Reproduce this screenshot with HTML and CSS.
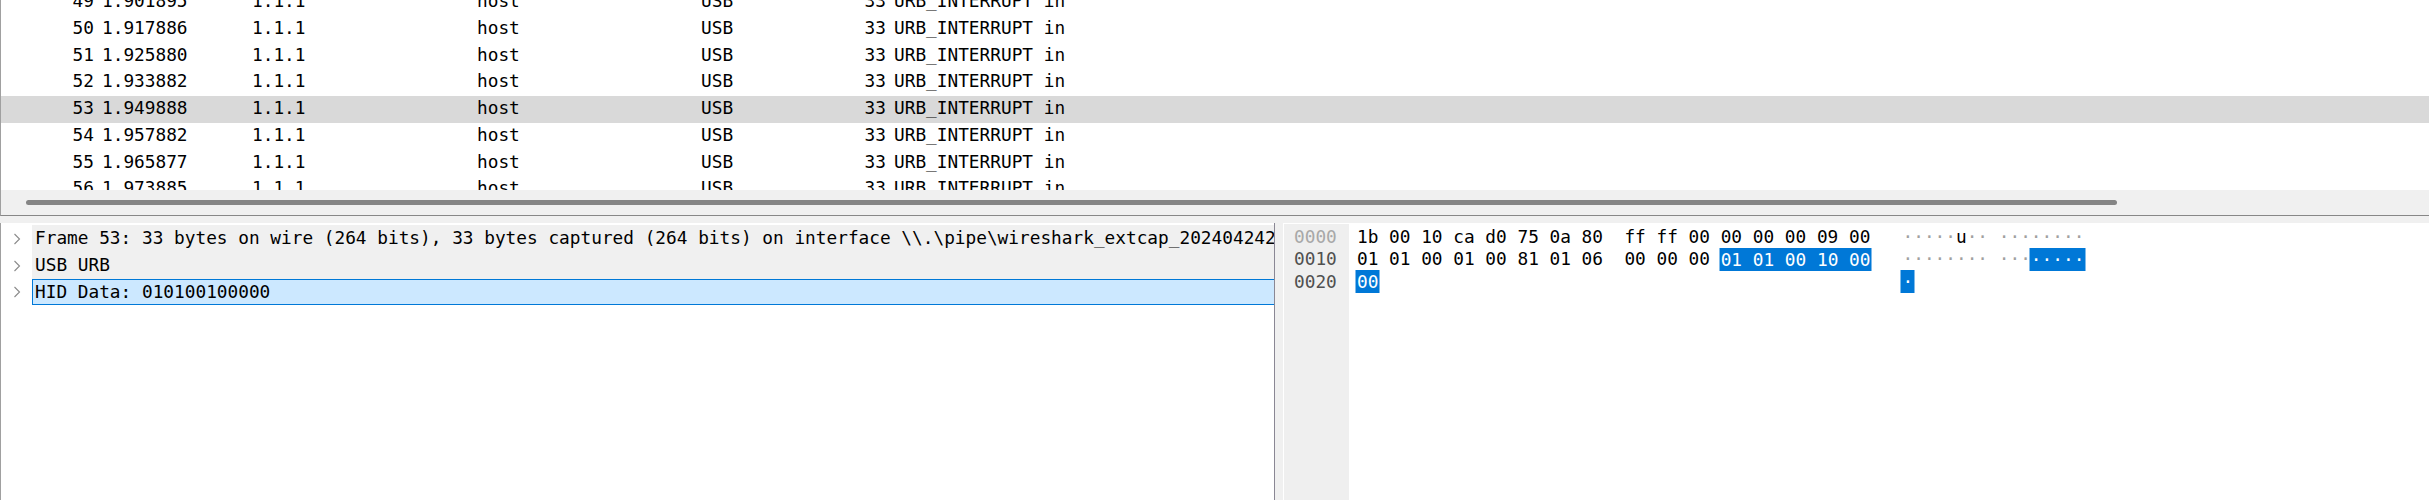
FILE: index.html
```
<!DOCTYPE html>
<html>
<head>
<meta charset="utf-8">
<link rel="stylesheet" href="styles.css">
</head>
<body>
<div class="app">
  <div class="list-frame">
    <div class="list">
      <div class="rows">
        <div class="row"><span class="no">49</span><span class="time">1.901895</span><span>1.1.1</span><span>host</span><span>USB</span><span class="len">33</span><span class="info">URB_INTERRUPT in</span></div>
        <div class="row"><span class="no">50</span><span class="time">1.917886</span><span>1.1.1</span><span>host</span><span>USB</span><span class="len">33</span><span class="info">URB_INTERRUPT in</span></div>
        <div class="row"><span class="no">51</span><span class="time">1.925880</span><span>1.1.1</span><span>host</span><span>USB</span><span class="len">33</span><span class="info">URB_INTERRUPT in</span></div>
        <div class="row"><span class="no">52</span><span class="time">1.933882</span><span>1.1.1</span><span>host</span><span>USB</span><span class="len">33</span><span class="info">URB_INTERRUPT in</span></div>
        <div class="row sel"><span class="no">53</span><span class="time">1.949888</span><span>1.1.1</span><span>host</span><span>USB</span><span class="len">33</span><span class="info">URB_INTERRUPT in</span></div>
        <div class="row"><span class="no">54</span><span class="time">1.957882</span><span>1.1.1</span><span>host</span><span>USB</span><span class="len">33</span><span class="info">URB_INTERRUPT in</span></div>
        <div class="row"><span class="no">55</span><span class="time">1.965877</span><span>1.1.1</span><span>host</span><span>USB</span><span class="len">33</span><span class="info">URB_INTERRUPT in</span></div>
        <div class="row"><span class="no">56</span><span class="time">1.973885</span><span>1.1.1</span><span>host</span><span>USB</span><span class="len">33</span><span class="info">URB_INTERRUPT in</span></div>
      </div>
    </div>
    <div class="hscroll"><div class="thumb"></div></div>
  </div>
  <div class="hsplit"></div>
  <div class="panes">
    <div class="tree">
      <div class="node dim">
        <span class="exp"><svg width="8" height="12" viewBox="0 0 8 12"><polyline points="1.5,1 6.5,6 1.5,11" fill="none" stroke="#8a8a8a" stroke-width="1.1"/></svg></span>
        <span class="label">Frame 53: 33 bytes on wire (264 bits), 33 bytes captured (264 bits) on interface \\.\pipe\wireshark_extcap_2024042422</span>
      </div>
      <div class="node dim">
        <span class="exp"><svg width="8" height="12" viewBox="0 0 8 12"><polyline points="1.5,1 6.5,6 1.5,11" fill="none" stroke="#8a8a8a" stroke-width="1.1"/></svg></span>
        <span class="label">USB URB</span>
      </div>
      <div class="node sel">
        <span class="exp"><svg width="8" height="12" viewBox="0 0 8 12"><polyline points="1.5,1 6.5,6 1.5,11" fill="none" stroke="#8a8a8a" stroke-width="1.1"/></svg></span>
        <span class="label">HID Data: 010100100000</span>
      </div>
    </div>
    <div class="vsplit"></div>
    <div class="hex">
      <div class="offs">
        <div class="off light">0000</div>
        <div class="off">0010</div>
        <div class="off">0020</div>
      </div>
      <div class="hexdata">
        <div class="hl-line">1b 00 10 ca d0 75 0a 80  ff ff 00 00 00 00 09 00</div>
        <div class="hl-line">01 01 00 01 00 81 01 06  00 00 00 <span class="hl">01 01 00 10 00</span></div>
        <div class="hl-line"><span class="hl">00</span></div>
      </div>
      <div class="ascii">
        <div class="hl-line"><span class="dot">·····</span>u<span class="dot">··</span> <span class="dot">········</span></div>
        <div class="hl-line"><span class="dot">········ ···</span><span class="hl">·····</span></div>
        <div class="hl-line"><span class="hl">·</span></div>
      </div>
    </div>
  </div>
</div>
</body>
</html>
```

FILE: styles.css
```
* { box-sizing: border-box; }
html, body { margin: 0; padding: 0; }
body {
  width: 2429px;
  height: 500px;
  overflow: hidden;
  background: #f0f0f0;
  font-family: "DejaVu Sans Mono", "Liberation Mono", monospace;
  font-size: 17.77px;
  color: #000;
}
.app { display: flex; flex-direction: column; height: 500px; }

.list-frame {
  border-left: 1px solid #a0a0a0;
  border-bottom: 1px solid #878787;
  background: #fff;
}
.list { height: 190px; overflow: hidden; background: #fff; }
.rows { margin-top: -11px; }
.row {
  display: grid;
  grid-template-columns: 93px 158px 225px 224px 99px 86px 1fr;
  height: 26.75px;
  line-height: 24.75px;
  white-space: pre;
}
.row.sel { background: #d9d9d9; }
.no, .len { text-align: right; }
.time, .info { padding-left: 8px; }

.hscroll { height: 25px; background: #f0f0f0; padding-top: 10px; }
.thumb {
  margin-left: 25px;
  width: 2091px;
  height: 5px;
  border-radius: 3px;
  background: #858585;
}
.hsplit { height: 7px; background: #f0f0f0; }

.panes { flex: 1; display: flex; min-height: 0; }
.tree {
  width: 1275px;
  flex: none;
  background: #fff;
  border-left: 1px solid #a0a0a0;
  border-right: 1px solid #8a8794;
  padding-top: 2px;
  overflow: hidden;
}
.node { display: flex; height: 26.75px; }
.exp {
  width: 31px;
  flex: none;
  display: flex;
  align-items: center;
  padding-left: 12px;
  padding-top: 1px;
}
.exp svg { display: block; }
.label {
  flex: 1;
  min-width: 0;
  overflow: hidden;
  white-space: pre;
  border: 1px solid transparent;
  border-right: none;
  padding-left: 2px;
  line-height: 24.75px;
}
.node.dim .label { background: #f0f0f0; }
.node.sel .label { background: #cce8ff; border-color: #0078d7; }

.vsplit { width: 8px; flex: none; background: #f0f0f0; }

.hex {
  flex: 1;
  display: flex;
  background: #fff;
  border-left: 1px solid #fff;
  border-top: 1px solid #fff;
  line-height: 22.4px;
}
.offs {
  width: 65px;
  flex: none;
  background: #efefef;
  padding: 2px 0 0 10px;
  color: #505050;
}
.off { height: 22.4px; white-space: pre; }
.off.light { color: #a8a8a8; }
.hexdata {
  flex: none;
  width: calc(51ch + 8px);
  padding: 2px 0 0 8px;
}
.ascii { padding-top: 2px; }
.hl-line { height: 22.4px; white-space: pre; }
.hl {
  background: #0078d7;
  color: #fff;
  padding: 1.5px 0;
  box-shadow: 1.5px 0 0 #0078d7, -1.5px 0 0 #0078d7;
}
.dot { color: #a0a0a0; }
```
